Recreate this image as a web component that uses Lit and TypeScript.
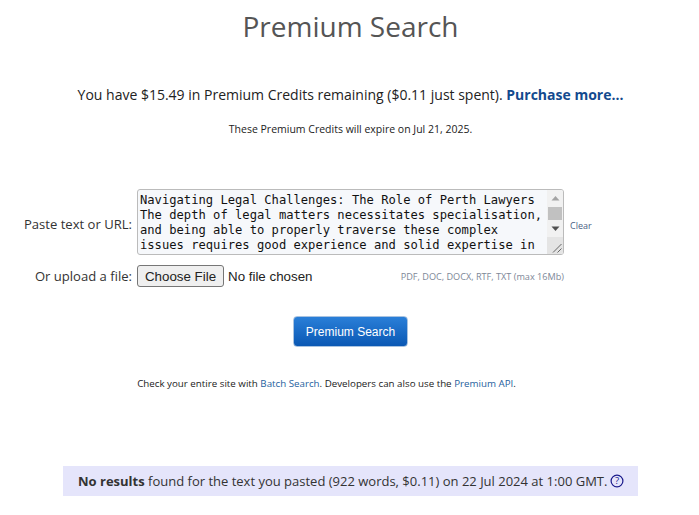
import { LitElement, html, css } from "lit";
import { customElement } from "lit/decorators.js";

@customElement("app-root")
export class AppRoot extends LitElement {
  static styles = css`
    :host { display: block; width: 699px; height: 515px; overflow: hidden; background: #fff; font-family: "Open Sans", sans-serif; color: #222; }
    h1 { margin: 0; padding: 7px 0 0 2px; height: 62px; box-sizing: content-box; font-size: 28px; line-height: 38px; font-weight: 400; color: #555; text-align: center; }
    .credits { margin: 16px 0 0; font-size: 14px; line-height: 20px; text-align: center; padding-left: 2px; }
    .credits a { color: #134a8e; font-weight: 700; }
    .expire { margin: 17px 0 0; font-size: 10.5px; line-height: 14px; text-align: center; padding-left: 2px; }
    .form { margin-top: 53px; display: grid; grid-template-columns: 132px 427px auto; column-gap: 5px; align-items: center; }
    label { font-family: "Open Sans", sans-serif; font-size: 13.07px; text-align: right; color: #333; }
    .form > label:first-child { padding-top: 4px; }
    .ta { display: flex; height: 66px; box-sizing: border-box; border: 1px solid #bbb; border-radius: 3px; background: #f6f8fb; overflow: hidden; }
    .text { flex: 1; padding: 3px 0 0 2px; font-family: "DejaVu Sans Mono", monospace; font-size: 12.15px; line-height: 15px; white-space: pre; overflow: hidden; color: #111; }
    .sb { width: 16px; background: #f1f1f1; display: flex; flex-direction: column; align-items: center; margin-right: 0; }
    .arrow { height: 17px; display: flex; align-items: center; justify-content: center; }
    .thumb { width: 14px; height: 14px; background: #c1c1c1; }
    .grip { margin-top: auto; width: 16px; height: 17px; background: #e4e4e4; }
    .clear { font-size: 9px; color: #4a5f85; margin-left: 1px; padding-top: 6px; }
    .form.row2 { margin-top: 10px; height: 22px; }
    .form.row2 > label:first-child { padding-top: 0; }
    .file { display: flex; align-items: center; font-family: "Liberation Sans", sans-serif; font-size: 13.33px; color: #222; justify-content: space-between; }
    .file-left { display: flex; align-items: center; gap: 4px; }
    .choose { height: 22px; width: 87px; box-sizing: border-box; padding: 0; border: 1px solid #767676; border-radius: 3px; background: #efefef; font: inherit; color: #222; }
    .types { font-family: "Open Sans", sans-serif; font-size: 9.13px; color: #7d8797; }
    .action { display: flex; justify-content: center; margin-top: 29px; padding-left: 2px; }
    .btn { width: 115px; height: 31px; box-sizing: border-box; border: 1px solid #a9c3e0; border-radius: 4px; background: linear-gradient(#2a7fd8, #0a58b4); color: #fff; font-family: "Liberation Sans", sans-serif; font-size: 12px; padding: 0; }
    .note { margin: 30px 0 0; font-size: 9.75px; line-height: 14px; text-align: center; padding-right: 46px; }
    .note a { color: #1f5f9e; }
    .result { margin: 75px 0 0 63px; width: 575px; height: 30px; box-sizing: border-box; background: #e5e5fb; display: flex; align-items: center; padding-left: 15px; gap: 3px; font-size: 13px; color: #333; white-space: nowrap; }
    .result svg { flex: none; }
  `;

  render() {
    const text = "Navigating Legal Challenges: The Role of Perth Lawyers\nThe depth of legal matters necessitates specialisation,\nand being able to properly traverse these complex\nissues requires good experience and solid expertise in";
    return html`
      <h1>Premium Search</h1>
      <p class="credits">You have $15.49 in Premium Credits remaining ($0.11 just spent). <a>Purchase more...</a></p>
      <p class="expire">These Premium Credits will expire on Jul 21, 2025.</p>
      <div class="form">
        <label>Paste text or URL:</label>
        <div class="ta">
          <div class="text">${text}</div>
          <div class="sb">
            <div class="arrow"><svg width="9" height="6" viewBox="0 0 9 6"><path d="M4.5 1 8.5 5.5H.5z" fill="#a3a3a3"/></svg></div>
            <div class="thumb"></div>
            <div class="arrow"><svg width="9" height="6" viewBox="0 0 9 6"><path d="M.5.5h8L4.5 5z" fill="#505050"/></svg></div>
            <div class="grip"><svg width="16" height="17" viewBox="0 0 16 17"><path d="M6 15.5 14.5 7M10.5 15.5l4-4" stroke="#666" fill="none"/></svg></div>
          </div>
        </div>
        <span class="clear">Clear</span>
      </div>
      <div class="form row2">
        <label>Or upload a file:</label>
        <div class="file">
          <div class="file-left"><button class="choose">Choose File</button><span>No file chosen</span></div>
          <span class="types">PDF, DOC, DOCX, RTF, TXT (max 16Mb)</span>
        </div>
      </div>
      <div class="action"><button class="btn">Premium Search</button></div>
      <p class="note">Check your entire site with <a>Batch Search</a>. Developers can also use the <a>Premium API</a>.</p>
      <div class="result"><span><b>No results</b> found for the text you pasted (922 words, $0.11) on 22 Jul 2024 at 1:00 GMT.</span>
        <svg width="14" height="14" viewBox="0 0 14 14"><circle cx="7" cy="7" r="5.9" fill="none" stroke="#1a1a8c" stroke-width="1.2"/><text x="7" y="10.3" text-anchor="middle" font-size="9.5" font-family="Open Sans" fill="#1a1a8c">?</text></svg>
      </div>
    `;
  }
}
